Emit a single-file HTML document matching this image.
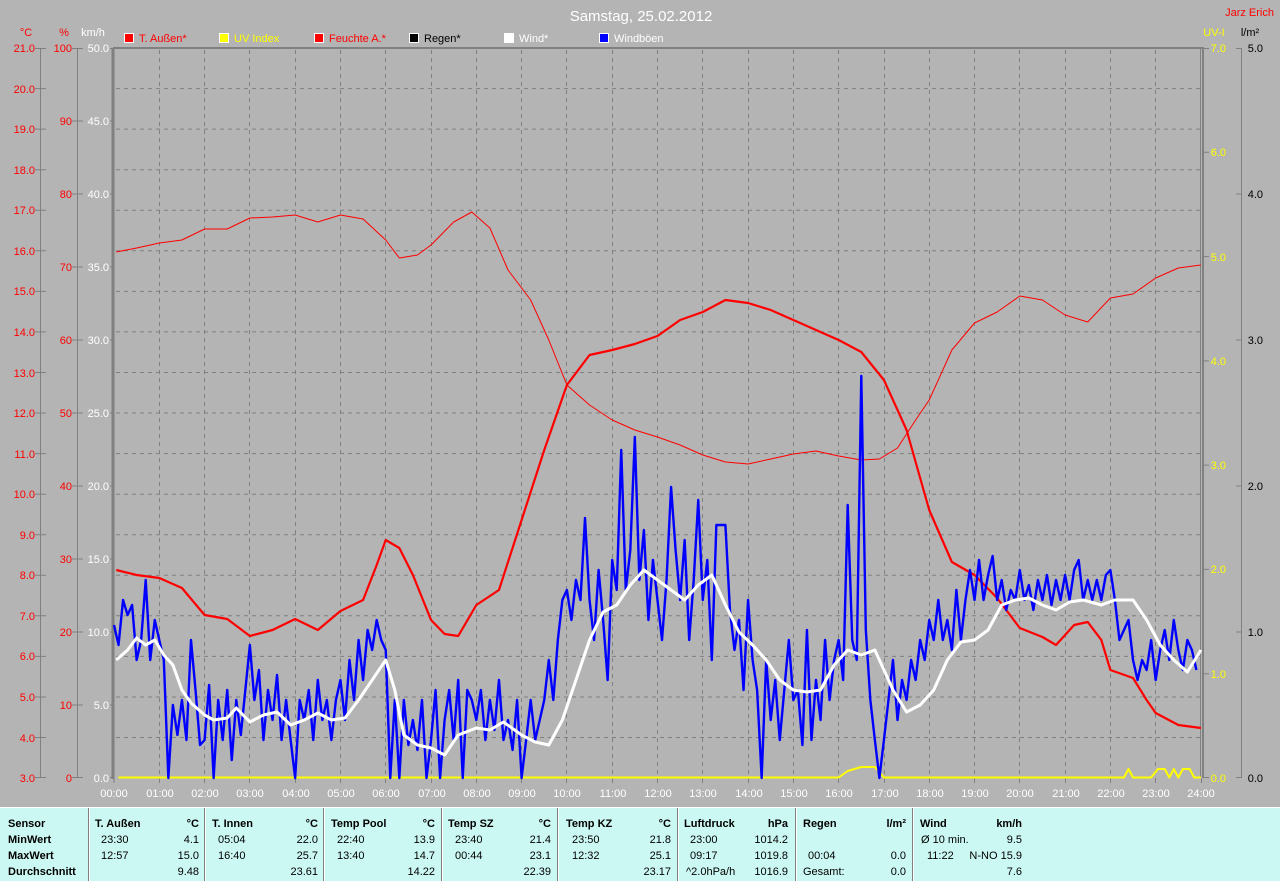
<!DOCTYPE html>
<html><head><meta charset="utf-8"><style>
html,body{margin:0;padding:0;background:#b4b4b4;}
svg{display:block;font-family:"Liberation Sans",sans-serif;}
</style></head><body>
<svg width="1280" height="881" viewBox="0 0 1280 881" xmlns="http://www.w3.org/2000/svg">
<rect width="1280" height="881" fill="#b4b4b4"/>
<text x="641" y="21" fill="#fff" font-size="15" text-anchor="middle">Samstag, 25.02.2012</text>
<text x="1274" y="16" fill="#f00" font-size="11" text-anchor="end">Jarz Erich</text>

<g font-size="11">
<rect x="124.5" y="33.5" width="9" height="9" fill="#f00" stroke="#fff"/><text x="139" y="42" fill="#f00">T. Außen*</text>
<rect x="219.5" y="33.5" width="9" height="9" fill="#ff0" stroke="#fff"/><text x="234" y="42" fill="#ff0">UV Index</text>
<rect x="314.5" y="33.5" width="9" height="9" fill="#f00" stroke="#fff"/><text x="329" y="42" fill="#f00">Feuchte A.*</text>
<rect x="409.5" y="33.5" width="9" height="9" fill="#000" stroke="#fff"/><text x="424" y="42" fill="#000">Regen*</text>
<rect x="504.5" y="33.5" width="9" height="9" fill="#fff" stroke="#fff"/><text x="519" y="42" fill="#fff">Wind*</text>
<rect x="599.5" y="33.5" width="9" height="9" fill="#00f" stroke="#fff"/><text x="614" y="42" fill="#fff">Windböen</text>
</g>

<g font-size="11">
<text x="26" y="36" fill="#f00" text-anchor="middle">°C</text>
<text x="64" y="36" fill="#f00" text-anchor="middle">%</text>
<text x="93" y="36" fill="#fff" text-anchor="middle">km/h</text>
<text x="1214" y="36" fill="#ff0" text-anchor="middle">UV-I</text>
<text x="1250" y="36" fill="#000" text-anchor="middle">l/m²</text>
</g>

<g stroke="#808080" fill="none">
<path d="M40.5 48V778M77.5 48V778M1241.5 48V778"/>
<path d="M35 48.5H46M35 88.6H46M35 129.1H46M35 169.7H46M35 210.2H46M35 250.8H46M35 291.4H46M35 331.9H46M35 372.5H46M35 413H46M35 453.6H46M35 494.2H46M35 534.7H46M35 575.3H46M35 615.8H46M35 656.4H46M35 697H46M35 737.5H46M35 777.5H46"/>
<path d="M72 48.5H83M72 121H83M72 194H83M72 267H83M72 340H83M72 413H83M72 486H83M72 559H83M72 632H83M72 705H83M72 777.5H83"/>
<path d="M110 48.5H114M110 121H114M110 194H114M110 267H114M110 340H114M110 413H114M110 486H114M110 559H114M110 632H114M110 705H114M110 777.5H114"/>
<path d="M1203 48.5H1209M1203 152.3H1209M1203 256.6H1209M1203 360.9H1209M1203 465.1H1209M1203 569.4H1209M1203 673.7H1209M1203 777.5H1209"/>
<path d="M1236 48.5H1241M1236 194H1241M1236 340H1241M1236 486H1241M1236 632H1241M1236 777.5H1241"/>
</g>

<g font-size="11" text-anchor="end">
<g fill="#f00">
<text x="35" y="52">21.0</text><text x="35" y="93">20.0</text><text x="35" y="133">19.0</text><text x="35" y="174">18.0</text><text x="35" y="214">17.0</text><text x="35" y="255">16.0</text><text x="35" y="295">15.0</text><text x="35" y="336">14.0</text><text x="35" y="377">13.0</text><text x="35" y="417">12.0</text><text x="35" y="458">11.0</text><text x="35" y="498">10.0</text><text x="35" y="539">9.0</text><text x="35" y="579">8.0</text><text x="35" y="620">7.0</text><text x="35" y="660">6.0</text><text x="35" y="701">5.0</text><text x="35" y="742">4.0</text><text x="35" y="782">3.0</text>
<text x="72" y="52">100</text><text x="72" y="125">90</text><text x="72" y="198">80</text><text x="72" y="271">70</text><text x="72" y="344">60</text><text x="72" y="417">50</text><text x="72" y="490">40</text><text x="72" y="563">30</text><text x="72" y="636">20</text><text x="72" y="709">10</text><text x="72" y="782">0</text>
</g>
<g fill="#fff">
<text x="109" y="52">50.0</text><text x="109" y="125">45.0</text><text x="109" y="198">40.0</text><text x="109" y="271">35.0</text><text x="109" y="344">30.0</text><text x="109" y="417">25.0</text><text x="109" y="490">20.0</text><text x="109" y="563">15.0</text><text x="109" y="636">10.0</text><text x="109" y="709">5.0</text><text x="109" y="782">0.0</text>
</g>
<g fill="#ff0">
<text x="1226" y="52">7.0</text><text x="1226" y="156">6.0</text><text x="1226" y="261">5.0</text><text x="1226" y="365">4.0</text><text x="1226" y="469">3.0</text><text x="1226" y="573">2.0</text><text x="1226" y="678">1.0</text><text x="1226" y="782">0.0</text>
</g>
<g fill="#000">
<text x="1263" y="52">5.0</text><text x="1263" y="198">4.0</text><text x="1263" y="344">3.0</text><text x="1263" y="490">2.0</text><text x="1263" y="636">1.0</text><text x="1263" y="782">0.0</text>
</g>
</g>

<g stroke="#808080" stroke-dasharray="4,4" fill="none">
<path d="M116 88.6H1200M116 129.1H1200M116 169.7H1200M116 210.2H1200M116 250.8H1200M116 291.4H1200M116 331.9H1200M116 372.5H1200M116 413H1200M116 453.6H1200M116 494.2H1200M116 534.7H1200M116 575.3H1200M116 615.8H1200M116 656.4H1200M116 697H1200M116 737.5H1200"/>
<path d="M159.5 50V778M204.5 50V778M249.5 50V778M295.5 50V778M340.5 50V778M385.5 50V778M431.5 50V778M476.5 50V778M521.5 50V778M566.5 50V778M612.5 50V778M657.5 50V778M702.5 50V778M748.5 50V778M793.5 50V778M838.5 50V778M884.5 50V778M929.5 50V778M974.5 50V778M1019.5 50V778M1065.5 50V778M1110.5 50V778M1155.5 50V778"/>
</g>
<g stroke="#808080" fill="none">
<path d="M113 48V779" stroke-width="3"/>
<path d="M113 48H1204" stroke-width="2"/>
<path d="M1200.5 48V778"/>
<path d="M1203 48V778" stroke-width="2"/>
<path d="M114 778.5V783M159.5 778V783M204.5 778V783M249.5 778V783M295.5 778V783M340.5 778V783M385.5 778V783M431.5 778V783M476.5 778V783M521.5 778V783M566.5 778V783M612.5 778V783M657.5 778V783M702.5 778V783M748.5 778V783M793.5 778V783M838.5 778V783M884.5 778V783M929.5 778V783M974.5 778V783M1019.5 778V783M1065.5 778V783M1110.5 778V783M1155.5 778V783M1201.5 778V783"/>
</g>

<g font-size="11" fill="#fff" text-anchor="middle">
<text x="114" y="797">00:00</text><text x="160" y="797">01:00</text><text x="205" y="797">02:00</text><text x="250" y="797">03:00</text><text x="296" y="797">04:00</text><text x="341" y="797">05:00</text><text x="386" y="797">06:00</text><text x="432" y="797">07:00</text><text x="477" y="797">08:00</text><text x="522" y="797">09:00</text><text x="567" y="797">10:00</text><text x="613" y="797">11:00</text><text x="658" y="797">12:00</text><text x="703" y="797">13:00</text><text x="749" y="797">14:00</text><text x="794" y="797">15:00</text><text x="839" y="797">16:00</text><text x="885" y="797">17:00</text><text x="930" y="797">18:00</text><text x="975" y="797">19:00</text><text x="1020" y="797">20:00</text><text x="1066" y="797">21:00</text><text x="1111" y="797">22:00</text><text x="1156" y="797">23:00</text><text x="1201" y="797">24:00</text>
</g>

<g transform="translate(114,0) scale(45.29,1)" fill="none" stroke-linejoin="round">
<polyline vector-effect="non-scaling-stroke" stroke="#ff0" stroke-width="2" points="0.1,777.5 16,777.5 16.2,771 16.5,767 16.8,767 17,777.5 22.3,777.5 22.4,769 22.5,777.5 22.9,777.5 23.05,769 23.2,769 23.3,777.5 23.4,769 23.5,777.5 23.6,769 23.75,769 23.85,777.5 24,777.5"/>
<polyline vector-effect="non-scaling-stroke" stroke="#f00" stroke-width="1" points="0.05,252 0.5,248 1,243 1.5,240 2,229 2.5,229 3,218 3.5,217 4,215 4.5,222 5,215 5.5,219 6,240 6.3,258 6.7,255 7,245 7.5,222 7.9,212 8.3,228 8.7,270 9.2,300 9.6,340 10,385 10.5,405 11,420 11.5,430 12,437 12.5,445 13,455 13.5,462 14,464 14.5,459 15,454 15.5,451 16,456 16.5,460 16.9,459 17.3,448 17.7,420 18,400 18.5,350 19,323 19.5,312 20,296 20.5,300 21,315 21.5,322 22,298 22.5,294 23,278 23.5,268 24,265"/>
<polyline vector-effect="non-scaling-stroke" stroke="#f00" stroke-width="2.2" points="0.05,570 0.5,575 1,578 1.5,588 2,615 2.5,619 3,636 3.5,630 4,619 4.5,630 5,611 5.5,600 5.8,565 6.0,540 6.3,548 6.6,575 7,620 7.3,634 7.6,636 8,605 8.5,590 9,520 9.5,450 10,385 10.5,355 11,350 11.5,344 12,336 12.5,320 13,312 13.5,300 14,303 14.5,310 15,320 15.5,330 16,340 16.5,352 17,380 17.5,430 18,510 18.5,562 19,575 19.5,598 20,628 20.5,637 20.8,645 21.2,625 21.5,622 21.8,640 22,670 22.5,678 22.8,700 23,713 23.5,725 24,728"/>
<polyline vector-effect="non-scaling-stroke" stroke="#00f" stroke-width="2.4" points="0,625 0.1,645 0.2,600 0.3,615 0.4,605 0.5,660 0.6,640 0.7,580 0.8,660 0.9,620 1.0,640 1.1,660 1.2,778 1.3,705 1.4,735 1.5,700 1.6,740 1.7,640 1.8,690 1.9,745 2.0,740 2.1,685 2.2,778 2.3,700 2.4,740 2.5,690 2.6,760 2.7,700 2.8,735 2.9,690 3.0,645 3.1,700 3.2,670 3.3,740 3.4,690 3.5,720 3.6,675 3.7,740 3.8,700 3.9,740 4.0,778 4.1,700 4.2,720 4.3,690 4.4,740 4.5,680 4.6,720 4.7,700 4.8,740 4.9,700 5.0,680 5.1,720 5.2,660 5.3,700 5.4,640 5.5,680 5.6,630 5.7,650 5.8,620 5.9,640 6.0,650 6.1,778 6.2,700 6.3,778 6.4,700 6.5,745 6.6,720 6.7,750 6.8,700 6.9,778 7.0,740 7.1,690 7.2,778 7.3,720 7.4,690 7.5,740 7.6,680 7.7,778 7.8,690 7.9,700 8.0,720 8.1,690 8.2,740 8.3,700 8.4,730 8.5,680 8.6,740 8.7,720 8.8,750 8.9,700 9.0,778 9.1,740 9.2,700 9.3,740 9.4,720 9.5,700 9.6,660 9.7,700 9.8,640 9.9,600 10.0,590 10.1,620 10.2,580 10.3,600 10.4,518 10.5,600 10.6,640 10.7,570 10.8,620 10.9,680 11.0,560 11.1,590 11.2,450 11.3,590 11.4,550 11.5,437 11.6,580 11.7,530 11.8,620 11.9,560 12.0,600 12.1,640 12.2,580 12.3,487 12.4,550 12.5,600 12.6,540 12.7,640 12.8,580 12.9,500 13.0,600 13.1,560 13.2,660 13.3,525 13.5,525 13.6,610 13.7,650 13.8,620 13.9,690 14.0,600 14.1,660 14.2,690 14.3,778 14.4,660 14.5,720 14.6,680 14.7,740 14.8,690 14.9,640 15.0,700 15.1,690 15.2,745 15.3,630 15.4,740 15.5,680 15.6,720 15.7,640 15.8,700 15.9,660 16.0,640 16.1,680 16.2,505 16.3,640 16.4,660 16.5,376 16.6,630 16.7,700 16.8,740 16.9,778 17.0,740 17.1,700 17.2,660 17.3,720 17.4,680 17.5,700 17.6,660 17.7,680 17.8,640 17.9,660 18.0,620 18.1,640 18.2,600 18.3,640 18.4,620 18.5,650 18.6,590 18.7,640 18.8,600 18.9,570 19.0,600 19.1,560 19.2,600 19.3,575 19.4,556 19.5,600 19.6,580 19.7,610 19.8,590 19.9,600 20.0,570 20.1,600 20.2,585 20.3,610 20.4,580 20.5,600 20.6,575 20.7,605 20.8,580 20.9,600 21.0,575 21.1,600 21.2,570 21.3,560 21.4,600 21.5,580 21.6,600 21.7,580 21.8,600 21.9,575 22.0,570 22.1,600 22.2,640 22.3,630 22.4,620 22.5,660 22.6,680 22.7,660 22.8,670 22.9,640 23.0,680 23.1,650 23.2,630 23.3,660 23.4,620 23.5,650 23.6,670 23.7,640 23.8,650 23.9,670"/>
<polyline vector-effect="non-scaling-stroke" stroke="#fff" stroke-width="3" points="0.05,660 0.3,650 0.5,638 0.7,645 0.9,640 1.1,655 1.3,665 1.5,690 1.7,703 2,715 2.2,720 2.5,718 2.7,708 3,722 3.3,715 3.6,712 3.9,725 4.2,720 4.5,713 4.8,720 5.1,718 5.4,700 5.7,680 6,660 6.2,690 6.4,735 6.7,745 7,748 7.3,755 7.6,735 8,728 8.3,730 8.6,722 9,735 9.3,742 9.6,745 9.9,720 10.2,680 10.5,640 10.8,612 11.1,605 11.4,585 11.7,570 12,580 12.3,590 12.6,600 12.9,585 13.2,575 13.5,605 13.8,632 14.1,645 14.4,660 14.7,680 15,690 15.3,692 15.6,690 15.9,665 16.2,650 16.5,655 16.8,650 17.2,690 17.5,712 17.8,705 18.1,690 18.4,660 18.7,642 19,640 19.3,630 19.6,605 19.9,600 20.2,598 20.5,605 20.8,610 21.1,602 21.4,600 21.8,605 22.1,600 22.5,600 22.8,620 23.1,645 23.4,660 23.7,672 24,650"/>
</g>

<rect x="0" y="807" width="1280" height="74" fill="#ccf8f4"/>
<path d="M0 807.5H1280" stroke="#fff"/>
<g stroke="#808080">
<path d="M88.5 808V881M204.5 808V881M323.5 808V881M441.5 808V881M557.5 808V881M677.5 808V881M795.5 808V881M912.5 808V881"/>
</g>
<g stroke="#fff">
<path d="M89.5 808V881M205.5 808V881M324.5 808V881M442.5 808V881M558.5 808V881M678.5 808V881M796.5 808V881M913.5 808V881"/>
</g>
<g font-size="11" fill="#000">
<g font-weight="bold">
<text x="8" y="827">Sensor</text><text x="8" y="843">MinWert</text><text x="8" y="859">MaxWert</text><text x="8" y="875">Durchschnitt</text>
<text x="95" y="827">T. Außen</text><text x="212" y="827">T. Innen</text><text x="331" y="827">Temp Pool</text><text x="448" y="827">Temp SZ</text><text x="566" y="827">Temp KZ</text><text x="684" y="827">Luftdruck</text><text x="803" y="827">Regen</text><text x="920" y="827">Wind</text>
<g text-anchor="end"><text x="199" y="827">°C</text><text x="318" y="827">°C</text><text x="435" y="827">°C</text><text x="551" y="827">°C</text><text x="671" y="827">°C</text><text x="788" y="827">hPa</text><text x="906" y="827">l/m²</text><text x="1022" y="827">km/h</text></g>
</g>
<text x="101" y="843">23:30</text><text x="101" y="859">12:57</text>
<text x="218" y="843">05:04</text><text x="218" y="859">16:40</text>
<text x="337" y="843">22:40</text><text x="337" y="859">13:40</text>
<text x="455" y="843">23:40</text><text x="455" y="859">00:44</text>
<text x="572" y="843">23:50</text><text x="572" y="859">12:32</text>
<text x="690" y="843">23:00</text><text x="690" y="859">09:17</text><text x="686" y="875">^2.0hPa/h</text>
<text x="808" y="859">00:04</text><text x="803" y="875">Gesamt:</text>
<text x="921" y="843">Ø 10 min.</text><text x="927" y="859">11:22</text>
<g text-anchor="end">
<text x="199" y="843">4.1</text><text x="199" y="859">15.0</text><text x="199" y="875">9.48</text>
<text x="318" y="843">22.0</text><text x="318" y="859">25.7</text><text x="318" y="875">23.61</text>
<text x="435" y="843">13.9</text><text x="435" y="859">14.7</text><text x="435" y="875">14.22</text>
<text x="551" y="843">21.4</text><text x="551" y="859">23.1</text><text x="551" y="875">22.39</text>
<text x="671" y="843">21.8</text><text x="671" y="859">25.1</text><text x="671" y="875">23.17</text>
<text x="788" y="843">1014.2</text><text x="788" y="859">1019.8</text><text x="788" y="875">1016.9</text>
<text x="906" y="859">0.0</text><text x="906" y="875">0.0</text>
<text x="1022" y="843">9.5</text><text x="1022" y="859">N-NO 15.9</text><text x="1022" y="875">7.6</text>
</g>
</g>
</svg>
</body></html>
